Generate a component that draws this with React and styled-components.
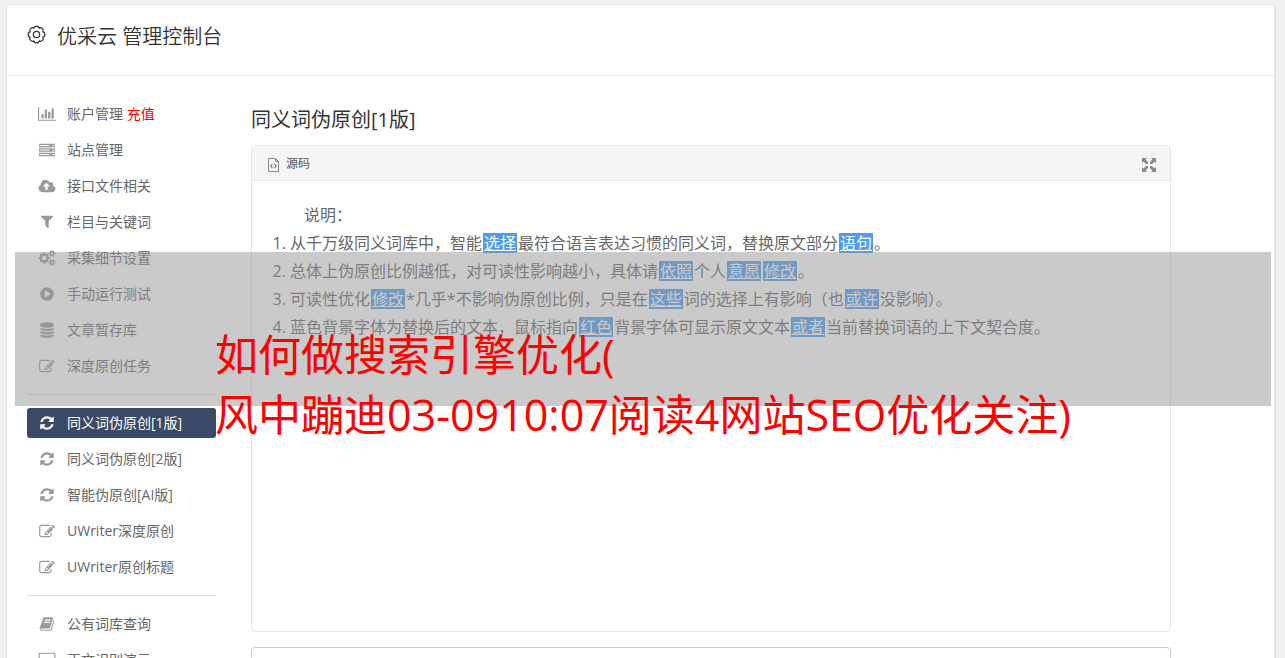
import React from "react";
import styled, { createGlobalStyle } from "styled-components";

const GlobalStyle = createGlobalStyle`
  * {
    box-sizing: border-box;
  }

  html {
    overflow: hidden;
  }

  body {
    margin: 0;
    background: #f1f1f1;
    color: #666;
    font-family: "Open Sans", "Noto Sans CJK SC", sans-serif;
    font-size: 14px;
    font-weight: 400;
  }
`;

// x, y, width and height of each glyph, followed by its outline
const ICONS = {
  chart: {
    box: [0, 128, 2048, 1536],
    d: "M640 896v512h-256v-512h256zm384-512v1024h-256v-1024h256zm1024 1152v128h-2048v-1536h128v1408h1920zm-640-896v768h-256v-768h256zm384-384v1152h-256v-1152h256z",
  },
  server: {
    box: [0, 128, 1792, 1408],
    d: "M128 1408h1024v-128h-1024v128zm0-512h1024v-128h-1024v128zm1568 448q0-40-28-68t-68-28-68 28-28 68 28 68 68 28 68-28 28-68zm-1568-960h1024v-128h-1024v128zm1568 448q0-40-28-68t-68-28-68 28-28 68 28 68 68 28 68-28 28-68zm0-512q0-40-28-68t-68-28-68 28-28 68 28 68 68 28 68-28 28-68zm96 832v384h-1792v-384h1792zm0-512v384h-1792v-384h1792zm0-512v384h-1792v-384h1792z",
  },
  cloud: {
    box: [0, 128, 1920, 1408],
    d: "M1280 864q0-14-9-23l-352-352q-9-9-23-9t-23 9l-351 351q-10 12-10 24 0 14 9 23t23 9h224v352q0 13 9.500 22.500t22.500 9.500h192q13 0 22.500-9.500t9.500-22.500v-352h224q13 0 22.500-9.500t9.500-22.500zm640 288q0 159-112.500 271.500t-271.500 112.500h-1088q-185 0-316.500-131.500t-131.500-316.500q0-130 70-240t188-165q-2-30-2-43 0-212 150-362t362-150q156 0 285.500 87t188.500 231q71-62 166-62 106 0 181 75t75 181q0 76-41 138 130 31 213.500 135.500t83.500 238.500z",
  },
  filter: {
    box: [0, 0, 1408, 1408],
    d: "M1403 39q17 41-14 70l-493 493v742q0 42-39 59-13 5-25 5-27 0-45-19l-256-256q-19-19-19-45v-486l-493-493q-31-29-14-70 17-39 59-39h1280q42 0 59 39z",
  },
  cogs: {
    box: [0, 0, 1920, 1792],
    d: "M896 896q0-106-75-181t-181-75-181 75-75 181 75 181 181 75 181-75 75-181zm768 512q0-52-38-90t-90-38-90 38-38 90q0 53 37.500 90.500t90.500 37.500 90.500-37.500 37.500-90.500zm0-1024q0-52-38-90t-90-38-90 38-38 90q0 53 37.500 90.500t90.500 37.500 90.500-37.500 37.500-90.500zm-384 421v185q0 10-7 19.500t-16 10.500l-155 24q-11 35-32 76 34 48 90 115 7 11 7 20 0 12-7 19-23 30-82.500 89.500t-78.500 59.500q-11 0-21-7l-115-90q-37 19-77 31-11 108-23 155-7 24-30 24h-186q-11 0-20-7.500t-10-17.500l-23-153q-34-10-75-31l-118 89q-7 7-20 7-11 0-21-8-144-133-144-160 0-9 7-19 10-14 41-53t47-61q-23-44-35-82l-152-24q-10-1-17-9.500t-7-19.500v-185q0-10 7-19.500t16-10.500l155-24q11-35 32-76-34-48-90-115-7-11-7-20 0-12 7-20 22-30 82-89t79-59q11 0 21 7l115 90q34-18 77-32 11-108 23-154 7-24 30-24h186q11 0 20 7.500t10 17.500l23 153q34 10 75 31l118-89q8-7 20-7 11 0 21 8 144 133 144 160 0 8-7 19-12 16-42 54t-45 60q23 48 34 82l152 23q10 2 17 10.500t7 19.500zm640 533v140q0 16-149 31-12 27-30 52 51 113 51 138 0 4-4 7-122 71-124 71-8 0-46-47t-52-68q-20 2-30 2t-30-2q-14 21-52 68t-46 47q-2 0-124-71-4-3-4-7 0-25 51-138-18-25-30-52-149-15-149-31v-140q0-16 149-31 13-29 30-52-51-113-51-138 0-4 4-7 4-2 35-20t59-34 30-16q8 0 46 46.500t52 67.500q20-2 30-2t30 2q51-71 92-112l6-2q4 0 124 70 4 3 4 7 0 25-51 138 17 23 30 52 149 15 149 31zm0-1024v140q0 16-149 31-12 27-30 52 51 113 51 138 0 4-4 7-122 71-124 71-8 0-46-47t-52-68q-20 2-30 2t-30-2q-14 21-52 68t-46 47q-2 0-124-71-4-3-4-7 0-25 51-138-18-25-30-52-149-15-149-31v-140q0-16 149-31 13-29 30-52-51-113-51-138 0-4 4-7 4-2 35-20t59-34 30-16q8 0 46 46.500t52 67.500q20-2 30-2t30 2q51-71 92-112l6-2q4 0 124 70 4 3 4 7 0 25-51 138 17 23 30 52 149 15 149 31z",
  },
  play: {
    box: [0, 128, 1536, 1536],
    d: "M768 128q209 0 385.500 103t279.500 279.500 103 385.500-103 385.500-279.500 279.500-385.500 103-385.500-103-279.500-279.500-103-385.500 103-385.500 279.500-279.500 385.500-103zm384 823q32-18 32-55t-32-55l-544-320q-31-19-64-1-32 19-32 56v640q0 37 32 56 16 8 32 8 17 0 32-9z",
  },
  database: {
    box: [0, 0, 1536, 1792],
    d: "M768 768q237 0 443-43t325-127v170q0 69-103 128t-280 93.500-385 34.500-385-34.500-280-93.500-103-128v-170q119 84 325 127t443 43zm0 768q237 0 443-43t325-127v170q0 69-103 128t-280 93.500-385 34.500-385-34.500-280-93.500-103-128v-170q119 84 325 127t443 43zm0-384q237 0 443-43t325-127v170q0 69-103 128t-280 93.500-385 34.500-385-34.500-280-93.500-103-128v-170q119 84 325 127t443 43zm0-1152q208 0 385 34.500t280 93.500 103 128v128q0 69-103 128t-280 93.500-385 34.500-385-34.500-280-93.500-103-128v-128q0-69 103-128t280-93.500 385-34.500z",
  },
  edit: {
    box: [0, 128, 1792, 1408],
    d: "M888 1184l116-116-152-152-116 116v56h96v96h56zm440-720q-16-16-33 1l-350 350q-17 17-1 33t33-1l350-350q17-17 1-33zm80 594v190q0 119-84.500 203.500t-203.500 84.500h-832q-119 0-203.500-84.500t-84.500-203.500v-832q0-119 84.500-203.500t203.500-84.500h832q63 0 117 25 15 7 18 23 3 17-9 29l-49 49q-14 14-32 8-23-6-45-6h-832q-66 0-113 47t-47 113v832q0 66 47 113t113 47h832q66 0 113-47t47-113v-126q0-13 9-22l64-64q15-15 35-7t20 29zm-96-738l288 288-672 672h-288v-288zm444 132l-92 92-288-288 92-92q28-28 68-28t68 28l152 152q28 28 28 68t-28 68z",
  },
  refresh: {
    box: [0, 0, 1536, 1536],
    d: "M1511 928q0 5-1 7-64 268-268 434.500t-478 166.500q-146 0-282.500-55t-243.500-157l-129 129q-19 19-45 19t-45-19-19-45v-448q0-26 19-45t45-19h448q26 0 45 19t19 45-19 45l-137 137q71 66 161 102t187 36q134 0 250-65t186-179q11-17 53-117 8-23 30-23h192q13 0 22.500 9.500t9.500 22.500zm25-800v448q0 26-19 45t-45 19h-448q-26 0-45-19t-19-45 19-45l138-138q-148-137-349-137-134 0-250 65t-186 179q-11 17-53 117-8 23-30 23h-199q-13 0-22.500-9.500t-9.500-22.500v-7q65-268 270-434.500t480-166.500q146 0 284 55.500t245 156.500l130-129q19-19 45-19t45 19 19 45z",
  },
  book: {
    box: [0, 128, 1664, 1536],
    d: "M1639 478q40 57 18 129l-275 906q-19 64-76.500 107.500t-122.500 43.500h-923q-77 0-148.500-53.500t-99.500-131.500q-24-67-2-127 0-4 3-27t4-37q1-8-3-21.500t-3-19.500q2-11 8-21t16.500-23.500 16.500-23.500q23-38 45-91.500t30-91.500q3-10 .5-30t-.5-28q3-11 17-28t17-23q21-36 42-92t25-90q1-9-2.500-32t.5-28q4-13 22-30.500t22-22.500q19-26 42.500-84.500t27.500-96.500q1-8-3-25.500t-2-26.500q2-8 9-18t18-23 17-21q8-12 16.500-30.500t15-35 16-36 19.500-32 26.500-23.500 36-11.500 47.500 5.500l-1 3q38-9 51-9h761q74 0 114 56t18 130l-274 906q-36 119-71.500 153.500t-128.500 34.500h-869q-27 0-38 15-11 16-1 43 24 70 144 70h923q29 0 56-15.500t35-41.500l300-987q7-22 5-57 38 15 59 43zm-1064 2q-4 13 2 22.500t20 9.500h608q13 0 25.500-9.500t16.500-22.500l21-64q4-13-2-22.500t-20-9.500h-608q-13 0-25.500 9.500t-16.500 22.500zm-83 256q-4 13 2 22.500t20 9.500h608q13 0 25.500-9.500t16.500-22.500l21-64q4-13-2-22.500t-20-9.500h-608q-13 0-25.500 9.500t-16.500 22.500z",
  },
  desktop: {
    box: [0, 0, 1920, 1664],
    d: "M1792 992v-832q0-13-9.500-22.500t-22.500-9.500h-1600q-13 0-22.500 9.500t-9.500 22.500v832q0 13 9.500 22.500t22.500 9.500h1600q13 0 22.500-9.500t9.500-22.500zm128-832v1088q0 66-47 113t-113 47h-544q0 37 16 77.500t32 71 16 43.500q0 26-19 45t-45 19h-512q-26 0-45-19t-19-45q0-14 16-44t32-70 16-78h-544q-66 0-113-47t-47-113v-1088q0-66 47-113t113-47h1600q66 0 113 47t47 113z",
  },
};

const MENU = [
  [
    { icon: "chart", label: "账户管理", extra: "充值" },
    { icon: "server", label: "站点管理" },
    { icon: "cloud", label: "接口文件相关" },
    { icon: "filter", label: "栏目与关键词" },
    { icon: "cogs", label: "采集细节设置" },
    { icon: "play", label: "手动运行测试" },
    { icon: "database", label: "文章暂存库" },
    { icon: "edit", label: "深度原创任务" },
  ],
  [
    { icon: "refresh", label: "同义词伪原创[1版]", active: true },
    { icon: "refresh", label: "同义词伪原创[2版]" },
    { icon: "refresh", label: "智能伪原创[AI版]" },
    { icon: "edit", label: "UWriter深度原创" },
    { icon: "edit", label: "UWriter原创标题" },
  ],
  [
    { icon: "book", label: "公有词库查询" },
    { icon: "desktop", label: "正文识别演示" },
  ],
];

const Page = styled.div`
  position: relative;
  padding: 4px 9px 0 6px;
`;

const Card = styled.div`
  background: #fff;
  border: 1px solid #e3e3e3;
  border-right-width: 2px;
  border-radius: 4px;
`;

const Header = styled.header`
  display: flex;
  align-items: center;
  gap: 11px;
  height: 71px;
  padding: 0 20px 7px;
  border-bottom: 1px solid #e5e5e5;
  color: #333;

  svg {
    margin-bottom: 4px;
  }

  h1 {
    margin: 0;
    font-size: 20px;
    font-weight: 350;
    line-height: 28px;
  }
`;

const Columns = styled.div`
  display: flex;
  gap: 35px;
  padding: 0 103px 0 20px;
`;

const Sidebar = styled.nav`
  flex: 0 0 189px;
  padding-top: 23px;
`;

const MenuGroup = styled.ul`
  display: grid;
  gap: 6px;
  margin: 0;
  padding: 0;
  list-style: none;

  & + & {
    margin-top: 13px;
    padding-top: 13px;
    border-top: 1px solid #ddd;
  }
`;

const MenuLink = styled.a`
  display: flex;
  align-items: center;
  gap: 11px;
  height: 30px;
  padding: 0 11px;
  border-radius: 3px;
  background: ${(props) => (props.$active ? "#3a4a66" : "transparent")};
  color: ${(props) => (props.$active ? "#fff" : "#666")};
  line-height: 20px;
  text-decoration: none;
  white-space: nowrap;

  svg {
    flex: none;
    fill: ${(props) => (props.$active ? "#fff" : "#999")};
  }
`;

const Recharge = styled.span`
  color: #f00;
`;

const Main = styled.main`
  flex: 1;
  min-width: 0;
  padding-top: 30px;

  h2 {
    margin: 0 0 11px;
    color: #333;
    font-size: 20px;
    font-weight: 400;
    line-height: 28px;
  }
`;

const Editor = styled.section`
  border: 1px solid #e5e5e5;
  border-radius: 4px;
`;

const Toolbar = styled.div`
  display: flex;
  align-items: center;
  justify-content: space-between;
  height: 35px;
  padding: 2px 14px 0;
  border-bottom: 1px solid #e5e5e5;
  border-radius: 3px 3px 0 0;
  background: #f5f5f5;
`;

const ToolButton = styled.button`
  display: flex;
  align-items: center;
  gap: 6px;
  padding: 0;
  border: 0;
  background: none;
  color: #555;
  font: inherit;
  font-size: 12px;
  line-height: 20px;
`;

const Content = styled.div`
  min-height: 450px;
  padding-top: 20px;
  font-size: 16px;
  line-height: 28px;

  p {
    margin: 0;
    padding-left: 20px;
    text-indent: 2em;
  }

  ol {
    margin: 0;
    padding-left: 38px;
  }
`;

const Swap = styled.u`
  display: inline-block;
  margin: 0 1px;
  padding: 0 1px;
  background: #4a9df3;
  color: #fff;
  line-height: 20px;
`;

const Source = styled.textarea`
  display: block;
  width: 100%;
  height: 120px;
  margin-top: 15px;
  border: 1px solid #ccc;
  border-radius: 4px;
  resize: none;
`;

const Banner = styled.div`
  position: absolute;
  top: 252px;
  left: 15px;
  right: 14px;
  display: flex;
  justify-content: center;
  height: 154px;
  padding-top: 73px;
  background: rgba(150, 150, 150, 0.5);
  color: #f00;
  font-size: 43px;
  line-height: 60px;
  white-space: nowrap;

  p {
    margin: 0;
  }
`;

const Icon = ({ name }) => {
  const { box, d } = ICONS[name];
  const [x, y, width, height] = box;

  return (
    <svg
      width="18"
      height="16"
      viewBox={`${x + width / 2 - 1024} ${y + height / 2 - 896} 2048 1792`}
      aria-hidden="true"
    >
      <path d={d} />
    </svg>
  );
};

const GearIcon = () => (
  <svg
    width="19"
    height="19"
    viewBox="0 0 19 19"
    fill="none"
    stroke="currentColor"
    strokeWidth="1.2"
    strokeLinejoin="round"
  >
    <path d="M6.900 3.200C7.300 .4 11.700 .4 12.100 3.200C14.400 1.500 17.500 4.600 15.800 6.900C18.600 7.300 18.600 11.700 15.800 12.100C17.500 14.400 14.400 17.500 12.100 15.800C11.700 18.600 7.300 18.600 6.900 15.800C4.600 17.500 1.500 14.400 3.200 12.100C.4 11.700 .4 7.300 3.200 6.900C1.500 4.600 4.600 1.500 6.900 3.200z" />
    <circle cx="9.500" cy="9.500" r="3.200" />
  </svg>
);

const SourceIcon = () => (
  <svg width="14" height="16" viewBox="0 0 14 16" fill="none" stroke="#888">
    <path d="M2.500 2.500h7l3 3v10h-10z" />
    <path d="M9.500 2.500v3h3" />
    <path
      d="M6.500 8l-1.800 2 1.800 2M8.500 8l1.800 2-1.800 2"
      strokeWidth="1.300"
    />
  </svg>
);

const ExpandIcon = () => (
  <svg width="14" height="16" viewBox="0 -2 14 16" fill="#888">
    <path d="M0 0h5L3.500 1.500 6 4v2H4L1.500 3.500 0 5z" />
    <path d="M14 0v5l-1.500-1.500L10 6H8V4l2.500-2.500L9 0z" />
    <path d="M0 14V9l1.500 1.500L4 8h2v2l-2.500 2.500L5 14z" />
    <path d="M14 14H9l1.500-1.500L8 10V8h2l2.500 2.500L14 9z" />
  </svg>
);

const App = () => {
  return (
    <Page>
      <GlobalStyle />
      <Card>
        <Header>
          <GearIcon />
          <h1>优采云 管理控制台</h1>
        </Header>

        <Columns>
          <Sidebar>
            {MENU.map((group, index) => (
              <MenuGroup key={index}>
                {group.map((item) => (
                  <li key={item.label}>
                    <MenuLink href="#" $active={item.active}>
                      <Icon name={item.icon} />
                      <span>
                        {item.label}
                        {item.extra ? <Recharge> {item.extra}</Recharge> : null}
                      </span>
                    </MenuLink>
                  </li>
                ))}
              </MenuGroup>
            ))}
          </Sidebar>

          <Main>
            <h2>同义词伪原创[1版]</h2>
            <Editor>
              <Toolbar>
                <ToolButton type="button">
                  <SourceIcon />
                  源码
                </ToolButton>
                <ToolButton type="button" aria-label="全屏">
                  <ExpandIcon />
                </ToolButton>
              </Toolbar>
              <Content>
                <p>说明：</p>
                <ol>
                  <li>
                    从千万级同义词库中，智能<Swap>选择</Swap>
                    最符合语言表达习惯的同义词，替换原文部分<Swap>语句</Swap>。
                  </li>
                  <li>
                    总体上伪原创比例越低，对可读性影响越小，具体请
                    <Swap>依照</Swap>个人<Swap>意愿</Swap>
                    <Swap>修改</Swap>。
                  </li>
                  <li>
                    可读性优化<Swap>修改</Swap>
                    *几乎*不影响伪原创比例，只是在<Swap>这些</Swap>
                    词的选择上有影响（也<Swap>或许</Swap>没影响）。
                  </li>
                  <li>
                    蓝色背景字体为替换后的文本，鼠标指向<Swap>红色</Swap>
                    背景字体可显示原文文本<Swap>或者</Swap>
                    当前替换词语的上下文契合度。
                  </li>
                </ol>
              </Content>
            </Editor>
            <Source aria-label="原文" />
          </Main>
        </Columns>
      </Card>

      <Banner>
        <p>
          如何做搜索引擎优化(
          <br />
          风中蹦迪03-0910:07阅读4网站SEO优化关注)
        </p>
      </Banner>
    </Page>
  );
};

export default App;
